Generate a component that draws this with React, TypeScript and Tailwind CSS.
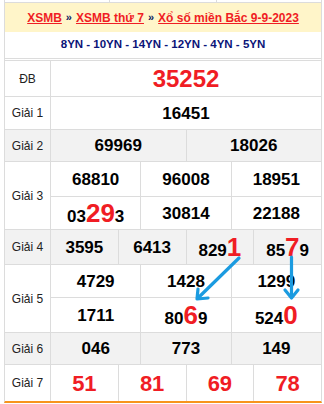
import React from 'react';

type Part = { t: string; red?: boolean };

const Num = ({ parts }: { parts: Part[] }) => (
	<span className="leading-none whitespace-nowrap">
		{parts.map((p, i) =>
			p.red ? (
				<span key={i} className="text-[26px] text-[#f01d24]">{p.t}</span>
			) : (
				<span key={i} className="text-[17px] text-black">{p.t}</span>
			)
		)}
	</span>
);

const cellRow = (items: (string | Part[])[], gray: boolean, h: string, first = true) => (
	<div className={`flex ${h} ${first ? '' : 'border-t border-[#dcdcdc]'}`}>
		{items.map((it, i) => (
			<div
				key={i}
				className={`flex-1 flex items-center justify-center font-bold ${i > 0 ? 'border-l border-[#dcdcdc]' : ''} ${gray ? 'bg-[#f2f2f2]' : 'bg-white'}`}
			>
				{typeof it === 'string' ? <Num parts={[{ t: it }]} /> : <Num parts={it} />}
			</div>
		))}
	</div>
);

const Label = ({ text, gray }: { text: string; gray?: boolean }) => (
	<div className={`w-[46px] shrink-0 flex items-center justify-center border-r border-[#dcdcdc] text-[12px] text-[#222] ${gray ? 'bg-[#f2f2f2]' : 'bg-white'}`}>
		{text}
	</div>
);

export default function App() {
	return (
		<div className="relative w-[324px] h-[404px] bg-white overflow-hidden font-['Liberation_Sans',Arial,sans-serif]">
			{/* cut-off row from the table above */}
			<div className="ml-[4px] w-[318px] h-[3px] flex border-x border-b border-[#dcdcdc]">
				<div className="w-[105px] border-r border-[#dcdcdc]" />
				<div className="w-[107px] border-r border-[#dcdcdc]" />
				<div className="flex-1" />
			</div>

			<div className="ml-[4px] w-[318px] border-x border-b-2 border-x-[#dcdcdc] border-b-[#f7941d]">
				{/* header */}
				<div className="h-[29px] bg-[#fff5c9] flex items-center justify-center text-[12px] font-bold text-[#0b1a5c] whitespace-nowrap">
					<span className="text-[#f01d24] underline decoration-[#f01d24]">XSMB</span>
					<span className="mx-[4px] text-[11px]">»</span>
					<span className="text-[#f01d24] underline decoration-[#f01d24]">XSMB thứ 7</span>
					<span className="mx-[4px] text-[11px]">»</span>
					<span className="text-[#f01d24] underline decoration-[#f01d24]">Xổ số miền Bắc 9-9-2023</span>
				</div>
				<div className="h-[27px] flex items-center justify-center text-[11.5px] font-bold text-[#0b1478] border-b border-[#dcdcdc]">
					8YN - 10YN - 14YN - 12YN - 4YN - 5YN
				</div>

				{/* ĐB */}
				<div className="flex h-[36px] border-t border-[#dcdcdc] mt-[1px]">
					<Label text="ĐB" />
					<div className="flex-1 flex items-center justify-center text-[24px] font-bold text-[#f01d24]">35252</div>
				</div>

				{/* Giải 1 */}
				<div className="flex h-[33px] border-t border-[#dcdcdc]">
					<Label text="Giải 1" />
					<div className="flex-1">{cellRow(['16451'], false, 'h-full')}</div>
				</div>

				{/* Giải 2 */}
				<div className="flex h-[32px] border-t border-[#dcdcdc]">
					<Label text="Giải 2" gray />
					<div className="flex-1">{cellRow(['69969', '18026'], true, 'h-full')}</div>
				</div>

				{/* Giải 3 */}
				<div className="flex border-t border-[#dcdcdc]">
					<Label text="Giải 3" />
					<div className="flex-1 flex flex-col">
						{cellRow(['68810', '96008', '18951'], false, 'h-[34px]')}
						{cellRow([[{ t: '03' }, { t: '29', red: true }, { t: '3' }], '30814', '22188'], false, 'h-[33px]', false)}
					</div>
				</div>

				{/* Giải 4 */}
				<div className="flex h-[35px] border-t border-[#dcdcdc]">
					<Label text="Giải 4" gray />
					<div className="flex-1">
						{cellRow(['3595', '6413', [{ t: '829' }, { t: '1', red: true }], [{ t: '85' }, { t: '7', red: true }, { t: '9' }]], true, 'h-full')}
					</div>
				</div>

				{/* Giải 5 */}
				<div className="flex border-t border-[#dcdcdc]">
					<Label text="Giải 5" />
					<div className="flex-1 flex flex-col">
						{cellRow(['4729', '1428', '1299'], false, 'h-[32px]')}
						{cellRow(['1711', [{ t: '80' }, { t: '6', red: true }, { t: '9' }], [{ t: '524' }, { t: '0', red: true }]], false, 'h-[35px]', false)}
					</div>
				</div>

				{/* Giải 6 */}
				<div className="flex h-[32px] border-t border-[#dcdcdc]">
					<Label text="Giải 6" gray />
					<div className="flex-1">{cellRow(['046', '773', '149'], true, 'h-full')}</div>
				</div>

				{/* Giải 7 */}
				<div className="flex h-[37px] border-t border-[#dcdcdc]">
					<Label text="Giải 7" />
					<div className="flex-1 flex">
						{['51', '81', '69', '78'].map((n, i) => (
							<div key={n} className={`flex-1 flex items-center justify-center text-[22px] font-bold text-[#f01d24] ${i > 0 ? 'border-l border-[#dcdcdc]' : ''}`}>
								{n}
							</div>
						))}
					</div>
				</div>
			</div>

			{/* hand-drawn arrows over the table */}
			<svg className="absolute left-0 top-0 pointer-events-none" width="324" height="404" viewBox="0 0 324 404">
				<g fill="none" stroke="#1b9be0" strokeWidth="3.2" strokeLinecap="round" strokeLinejoin="round">
					<path d="M239 258 L198 298" />
					<path d="M198 289 L197 299 L208 298" />
					<path d="M291.5 257 L291.5 297" />
					<path d="M285 290 L291.5 298 L298 290" />
				</g>
			</svg>
		</div>
	);
}
